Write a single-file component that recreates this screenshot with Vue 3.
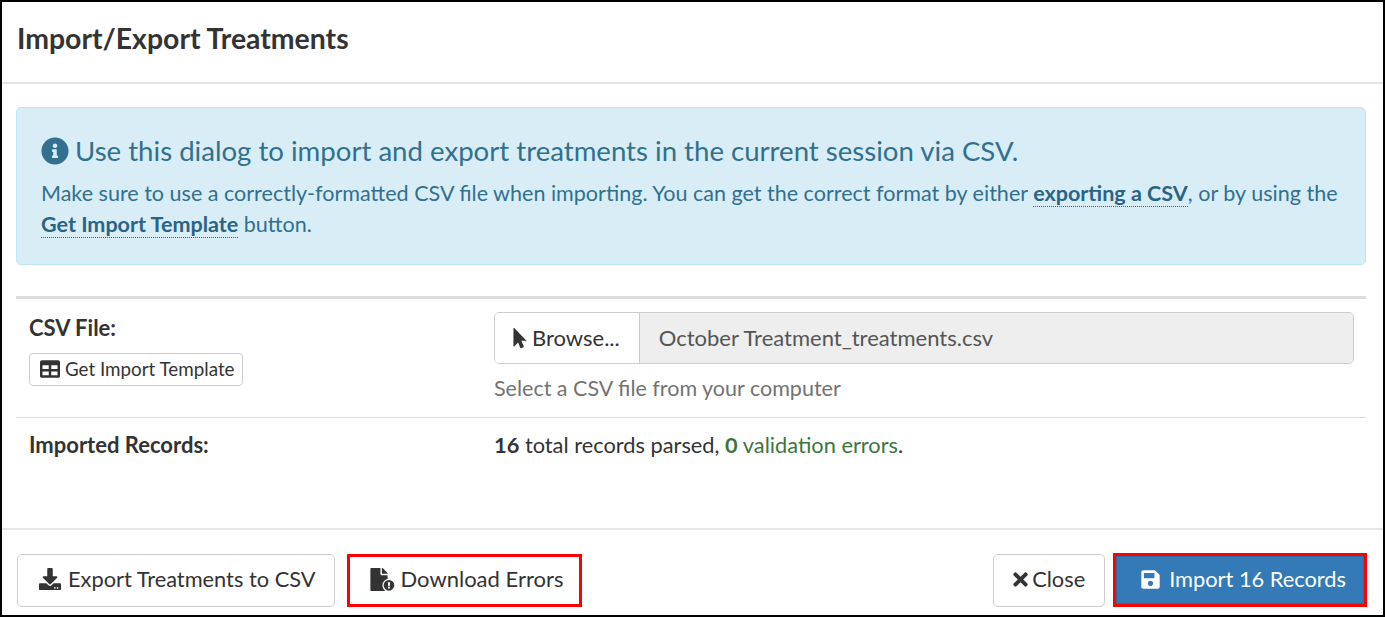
<template>
  <div class="modal">
    <header class="modal-header">
      <h4 class="modal-title">Import/Export Treatments</h4>
    </header>

    <section class="modal-body">
      <div class="alert">
        <h4 class="alert-title">
          <svg class="icon info-icon" viewBox="0 0 512 512" aria-hidden="true">
            <path fill="currentColor" d="M256 8C119 8 8 119 8 256s111 248 248 248 248-111 248-248S393 8 256 8zm0 110c23 0 42 19 42 42s-19 42-42 42-42-19-42-42 19-42 42-42zm56 254c0 7-5 12-12 12h-88c-7 0-12-5-12-12v-24c0-7 5-12 12-12h12v-64h-12c-7 0-12-5-12-12v-24c0-7 5-12 12-12h64c7 0 12 5 12 12v100h12c7 0 12 5 12 12v24z" />
          </svg>
          <span>Use this dialog to import and export treatments in the current session via CSV.</span>
        </h4>
        <p class="alert-text">
          Make sure to use a correctly-formatted CSV file when importing. You can get the correct format by either
          <a class="alert-link">exporting a CSV</a>, or by using the
          <a class="alert-link">Get Import Template</a> button.
        </p>
      </div>

      <div class="form-row form-row--first">
        <div class="form-label">
          <label>CSV File:</label>
          <button class="btn btn-xs" type="button">
            <svg class="icon" viewBox="0 0 512 512" aria-hidden="true">
              <path fill="currentColor" d="M464 32H48C21 32 0 53 0 80v352c0 27 21 48 48 48h416c27 0 48-21 48-48V80c0-27-21-48-48-48zM224 416H64v-96h160v96zm0-160H64v-96h160v96zm224 160H288v-96h160v96zm0-160H288v-96h160v96z" />
            </svg>
            Get Import Template
          </button>
        </div>
        <div class="form-value">
          <div class="file-input">
            <span class="browse">
              <svg class="icon cursor-icon" viewBox="0 0 320 512" aria-hidden="true">
                <path fill="currentColor" d="M302 316H194l57 139c4 10-1 20-10 24l-50 22c-10 4-20 0-24-10l-54-132-88 91C13 462 0 456 0 444V24C0 11 16 5 25 14l288 296c11 11 3 28-11 28z" transform="translate(0 -8)" />
              </svg>
              Browse...
            </span>
            <span class="file-name">{{ fileName }}</span>
          </div>
          <p class="help-text">Select a CSV file from your computer</p>
        </div>
      </div>

      <div class="form-row">
        <div class="form-label"><label>Imported Records:</label></div>
        <div class="form-value">
          <strong>{{ recordCount }}</strong> total records parsed,
          <span class="valid"><strong>{{ errorCount }}</strong> validation errors</span>.
        </div>
      </div>
    </section>

    <footer class="modal-footer">
      <button class="btn btn-export" type="button">
        <svg class="icon" viewBox="0 0 512 512" aria-hidden="true">
          <path fill="currentColor" d="M216 0h80c13 0 24 11 24 24v168h88c18 0 27 22 14 34L270 379c-7 8-21 8-28 0L90 226c-13-12-4-34 14-34h88V24c0-13 11-24 24-24zm296 376v112c0 13-11 24-24 24H24c-13 0-24-11-24-24V376c0-13 11-24 24-24h147l49 49c20 20 52 20 72 0l49-49h147c13 0 24 11 24 24zm-124 88c0-11-9-20-20-20s-20 9-20 20 9 20 20 20 20-9 20-20zm64 0c0-11-9-20-20-20s-20 9-20 20 9 20 20 20 20-9 20-20z" />
        </svg>
        Export Treatments to CSV
      </button>
      <button class="btn btn-flagged" type="button">
        <svg class="icon file-icon" viewBox="0 0 540 512" aria-hidden="true">
          <path fill="currentColor" d="M224 136V0H24C11 0 0 11 0 24v464c0 13 11 24 24 24h336c13 0 24-11 24-24V160H248c-13 0-24-11-24-24zm160-14v6H256V0h6c6 0 12 3 17 7l98 98c4 5 7 11 7 17z" />
          <circle cx="414" cy="386" r="146" fill="#fff" />
          <circle cx="414" cy="386" r="118" fill="currentColor" />
          <path fill="#fff" d="M388 318h52l-8 86h-36zM414 420a22 22 0 1 1 0 44 22 22 0 0 1 0-44z" />
        </svg>
        Download Errors
      </button>
      <span class="spacer"></span>
      <button class="btn btn-close" type="button">
        <svg class="icon close-icon" viewBox="0 0 352 512" aria-hidden="true">
          <path fill="currentColor" d="M243 256l100-100c12-12 12-32 0-44l-22-22c-12-12-32-12-44 0L176 190 76 90c-12-12-32-12-44 0L10 112c-12 12-12 32 0 44l100 100L10 356c-12 12-12 32 0 44l22 22c12 12 32 12 44 0l100-100 100 100c12 12 32 12 44 0l22-22c12-12 12-32 0-44L243 256z" />
        </svg>
        Close
      </button>
      <button class="btn btn-primary" type="button">
        <svg class="icon" viewBox="0 0 448 512" aria-hidden="true">
          <path fill="currentColor" d="M434 130l-84-84c-9-9-21-14-34-14H48C21 32 0 53 0 80v352c0 27 21 48 48 48h352c27 0 48-21 48-48V164c0-13-5-25-14-34zM224 416c-35 0-64-29-64-64s29-64 64-64 64 29 64 64-29 64-64 64zm96-304v100c0 7-5 12-12 12H76c-7 0-12-5-12-12V108c0-7 5-12 12-12h228c3 0 6 1 8 4l4 4c3 2 4 5 4 8z" />
        </svg>
        Import {{ recordCount }} Records
      </button>
    </footer>
  </div>
</template>

<script setup>
const fileName = "October Treatment_treatments.csv";
const recordCount = 16;
const errorCount = 0;
</script>

<style>
html,
body {
  margin: 0;
  background: #fff;
}
</style>

<style scoped>
.modal {
  box-sizing: border-box;
  width: 1385px;
  height: 617px;
  display: flex;
  flex-direction: column;
  border: 2px solid #000;
  background: #fff;
  color: #333;
  font-family: Lato, "Open Sans", sans-serif;
  font-size: 21.8px;
  line-height: 30px;
}

.icon {
  width: 21px;
  height: 21px;
  flex: none;
}

.modal-header {
  height: 82px;
  box-sizing: border-box;
  padding: 19px 15px 0;
  border-bottom: 2px solid #e5e5e5;
}

.modal-title {
  margin: 0;
  font-size: 28.4px;
  font-weight: 700;
  line-height: 34px;
}

.modal-body {
  flex: 1;
  padding: 23px 17px 0 14px;
}

.alert {
  height: 158px;
  box-sizing: border-box;
  padding: 25px 24px 0;
  border: 1px solid #bce8f1;
  border-radius: 5px;
  background: #d9edf7;
  color: #31708f;
}

.alert-title {
  display: flex;
  align-items: center;
  gap: 6px;
  margin: 0 0 9px;
  font-size: 27.6px;
  font-weight: 400;
  line-height: 36px;
}

.info-icon {
  width: 28px;
  height: 28px;
}

.alert-text {
  margin: 0;
  font-size: 21.54px;
  line-height: 31px;
}

.alert-link {
  font-weight: 700;
  color: #2a6485;
  border-bottom: 1px dotted #2a6485;
}

.form-row {
  display: flex;
  padding: 12px 12px 0 13px;
  border-top: 1px solid #ddd;
}

.form-row--first {
  height: 121px;
  box-sizing: border-box;
  margin-top: 31px;
  padding-top: 13px;
  border-top-width: 3px;
}

.form-label {
  width: 465px;
  flex: none;
}

.form-label label {
  display: block;
  font-size: 22px;
  font-weight: 700;
}

.form-row--first .form-label label {
  padding-top: 1px;
}

.form-value {
  flex: 1;
}

.file-input {
  display: flex;
  height: 52px;
  box-sizing: border-box;
  border: 1px solid #ccc;
  border-radius: 5px;
  overflow: hidden;
}

.browse {
  display: flex;
  align-items: center;
  gap: 5px;
  padding: 0 19px 0 18px;
  background: #fff;
  border-right: 1px solid #ccc;
  font-size: 22px;
}

.cursor-icon {
  width: 14px;
  height: 21px;
}

.file-name {
  flex: 1;
  display: flex;
  align-items: center;
  padding-left: 19px;
  background: #eee;
  color: #555;
  font-size: 22px;
}

.help-text {
  margin: 9px 0 0;
  font-size: 21.5px;
  color: #737373;
}

.valid {
  color: #3c763d;
}

.modal-footer {
  display: flex;
  align-items: center;
  gap: 12px;
  height: 87px;
  box-sizing: border-box;
  padding: 15px 16px 0 15px;
  border-top: 2px solid #e5e5e5;
}

.spacer {
  flex: 1;
}

.btn {
  display: inline-flex;
  align-items: center;
  justify-content: center;
  height: 53px;
  box-sizing: border-box;
  padding-bottom: 2px;
  border: 1px solid #ccc;
  border-radius: 5px;
  background: #fff;
  color: #333;
  font: inherit;
  font-size: 21.8px;
}

.btn-export {
  gap: 7px;
  padding: 0 18px 2px 21px;
}

.btn-export .icon {
  width: 22px;
  height: 22px;
}

.btn-xs {
  gap: 5px;
  height: 33px;
  margin-top: 10px;
  padding: 0 7px 2px 10px;
  border-radius: 4px;
  font-size: 18.8px;
}

.btn-xs .icon {
  width: 20px;
  height: 20px;
}

.btn-flagged {
  gap: 6px;
  padding: 0 16px 2px 20px;
  border: 3px solid #f00;
  border-radius: 0;
  font-size: 22px;
}

.file-icon {
  width: 25px;
  height: 23px;
}

.close-icon {
  width: 15px;
}

.btn-close {
  gap: 4px;
  padding: 0 19px 2px;
  margin-right: -4px;
}

.btn-primary {
  gap: 8px;
  height: 54px;
  padding: 0 18px 2px 24px;
  border: 3px solid #f00;
  background: #337ab7;
  color: #fff;
  border-radius: 0;
  box-shadow: inset 0 0 0 1px #2e6da4;
}
</style>
